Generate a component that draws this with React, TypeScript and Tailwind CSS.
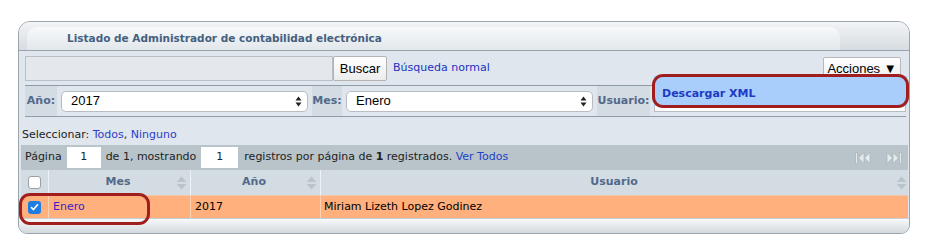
import React from 'react';

const SelectArrows = () => (
  <svg width="7" height="11" viewBox="0 0 7 11" className="shrink-0">
    <path d="M3.5 0.5 L6.5 4.5 L0.5 4.5 Z" fill="#222" />
    <path d="M3.5 10.5 L6.5 6.5 L0.5 6.5 Z" fill="#222" />
  </svg>
);

const SortArrows = () => (
  <svg width="11" height="14" viewBox="0 0 11 14" className="shrink-0">
    <path d="M5.5 0.5 L10.5 6 L0.5 6 Z" fill="#bcc4ca" />
    <path d="M5.5 13.5 L10.5 8 L0.5 8 Z" fill="#bcc4ca" />
  </svg>
);

const FirstIcon = () => (
  <svg width="16" height="12" viewBox="0 0 16 12">
    <rect x="0.5" y="0.5" width="2" height="11" fill="#e6ebee" stroke="#aab5bb" strokeWidth="0.8" />
    <path d="M9 0.5 L3.5 6 L9 11.5 Z" fill="#e6ebee" stroke="#aab5bb" strokeWidth="0.8" />
    <path d="M15 0.5 L9.5 6 L15 11.5 Z" fill="#e6ebee" stroke="#aab5bb" strokeWidth="0.8" />
  </svg>
);

const LastIcon = () => (
  <svg width="17" height="12" viewBox="0 0 17 12">
    <path d="M1 0.5 L6.5 6 L1 11.5 Z" fill="#e6ebee" stroke="#aab5bb" strokeWidth="0.8" />
    <path d="M7 0.5 L12.5 6 L7 11.5 Z" fill="#e6ebee" stroke="#aab5bb" strokeWidth="0.8" />
    <rect x="13.5" y="0.5" width="2" height="11" fill="#e6ebee" stroke="#aab5bb" strokeWidth="0.8" />
  </svg>
);

const FilterLabel = ({ text, width }: { text: string; width: string }) => (
  <div className={`${width} h-full flex items-center justify-center bg-[#d3dbe3] text-[11px] font-bold text-[#52698a]`}>
    {text}
  </div>
);

const FakeSelect = ({ value }: { value: string }) => (
  <div className="w-[247px] h-[21px] flex items-center justify-between rounded-[5px] border border-[#b9bdc2] bg-white pl-[9px] pr-[5px] font-['Liberation_Sans',Arial,sans-serif] text-[13px] text-black">
    <span>{value}</span>
    <SelectArrows />
  </div>
);

const App: React.FC = () => {
  return (
    <div className="relative w-[926px] h-[250px] bg-white pt-[21px] pl-[18px] font-['DejaVu_Sans',Verdana,sans-serif]">
      <div className="w-[892px] h-[213px] border border-[#9aa5ad] rounded-t-[12px] rounded-b-[9px] bg-[#dfe6ee] overflow-hidden flex flex-col">
        {/* header strip */}
        <div className="h-[29px] shrink-0 border-b border-[#9aa4ad] bg-gradient-to-b from-[#f2f4f6] to-[#d6dce1] flex items-end">
          <div className="ml-[8px] w-[813px] h-[23px] rounded-t-[10px] bg-gradient-to-b from-[#f7f9fa] to-[#e2e7eb] flex items-center pl-[40px] text-[10.5px] font-bold text-[#45607f]">
            Listado de Administrador de contabilidad electrónica
          </div>
        </div>

        {/* search row */}
        <div className="shrink-0 ml-[6px] mr-[3px] pt-[5px] pb-[4px] border-b border-[#8f9ba6] flex items-center">
          <div className="w-[308px] h-[25px] bg-[#e4e8ec] border border-[#b8c0c7]" />
          <div className="w-[54px] h-[25px] flex items-center justify-center border border-[#b3b3b3] rounded-[2px] bg-gradient-to-b from-[#ffffff] to-[#ececec] font-['Liberation_Sans',Arial,sans-serif] text-[13px] text-black">
            Buscar
          </div>
          <span className="ml-[6px] text-[11px] text-[#2032c0]">Búsqueda normal</span>
          <div className="ml-auto mr-[5px] w-[78px] h-[23px] flex items-center justify-center border border-[#b8b8b8] rounded-[2px] bg-gradient-to-b from-[#ffffff] to-[#eeeeee] font-['Liberation_Sans',Arial,sans-serif] text-[13px] text-black">
            Acciones ▼
          </div>
        </div>

        {/* filter row */}
        <div className="shrink-0 h-[31px] ml-[6px] mr-[3px] border-b border-[#8f9ba6] flex items-center gap-[4px]">
          <FilterLabel text="Año:" width="w-[32px]" />
          <FakeSelect value="2017" />
          <FilterLabel text="Mes:" width="w-[30px]" />
          <FakeSelect value="Enero" />
          <FilterLabel text="Usuario:" width="w-[53px]" />
          <div className="w-[252px] h-[21px] bg-white border border-[#b9bdc2]" />
        </div>

        {/* select */}
        <div className="shrink-0 h-[28px] pl-[3px] pt-[11px] text-[11px] leading-[14px] text-[#222]">
          Seleccionar: <span className="text-[#2a3ec6]">Todos</span>, <span className="text-[#2a3ec6]">Ninguno</span>
        </div>

        {/* table */}
        <div className="shrink-0 ml-[2px] mr-[1px] flex flex-col">
          <div className="h-[25px] bg-[#b8c4ca] flex items-center pl-[4px] text-[11px] text-[#222]">
            <span>Página</span>
            <div className="ml-[5px] w-[34px] h-[21px] bg-white flex items-center justify-center">1</div>
            <span className="ml-[5px]">de 1, mostrando</span>
            <div className="ml-[5px] w-[37px] h-[21px] bg-white flex items-center justify-center">1</div>
            <span className="ml-[6px]">
              registros por página de <b>1</b> registrados. <span className="text-[#2241c8]">Ver Todos</span>
            </span>
            <div className="ml-auto mr-[5px] flex items-center gap-[15px]">
              <FirstIcon />
              <LastIcon />
            </div>
          </div>

          <div className="h-[25px] bg-[#d3dce3] flex text-[11px] font-bold text-[#52698a]">
            <div className="w-[28px] flex items-center justify-center border-r border-[#eef2f5]">
              <div className="w-[13px] h-[13px] rounded-[3px] border border-[#9aa0a6] bg-white" />
            </div>
            <div className="w-[142px] flex items-center border-r border-[#eef2f5] pr-[3px]">
              <span className="flex-1 text-center pl-[11px]">Mes</span>
              <SortArrows />
            </div>
            <div className="w-[130px] flex items-center border-r border-[#eef2f5] pr-[3px]">
              <span className="flex-1 text-center pl-[11px]">Año</span>
              <SortArrows />
            </div>
            <div className="flex-1 flex items-center pr-[1px]">
              <span className="flex-1 text-center pl-[11px]">Usuario</span>
              <SortArrows />
            </div>
          </div>

          <div className="h-[23px] bg-[#ffb07c] flex text-[11px] text-black border-t border-[#f3c7a8]">
            <div className="w-[28px] flex items-center justify-center border-r border-[#ffd2b3]">
              <div className="w-[13px] h-[13px] rounded-[3px] bg-[#1e7ce3] flex items-center justify-center">
                <svg width="9" height="8" viewBox="0 0 9 8">
                  <path d="M1 4.2 L3.4 6.5 L8 1.2" fill="none" stroke="white" strokeWidth="1.6" />
                </svg>
              </div>
            </div>
            <div className="w-[142px] flex items-center pl-[4px] border-r border-[#ffd2b3] text-[#3a1ec6]">Enero</div>
            <div className="w-[130px] flex items-center pl-[4px] border-r border-[#ffd2b3]">2017</div>
            <div className="flex-1 flex items-center pl-[3px]">Miriam Lizeth Lopez Godinez</div>
          </div>
        </div>

        {/* footer */}
        <div className="flex-1 border-t border-[#c9d0d6] bg-gradient-to-b from-[#f8f9fa] to-[#d3d9de]" />
      </div>

      {/* dropdown menu */}
      <div className="absolute left-[654px] top-[76px] w-[253px] h-[30px] bg-[#a9cefb] pl-[8px] pt-[11px] leading-[13px] text-[11px] font-bold text-[#1d3cc4]">
        Descargar XML
      </div>

      {/* red highlight outlines */}
      <div className="absolute left-[652px] top-[74px] w-[257px] h-[34px] rounded-[11px] border-[3px] border-[#a11e1e]" />
      <div className="absolute left-[19px] top-[193px] w-[131px] h-[32px] rounded-[11px] border-[3px] border-[#a11e1e]" />
    </div>
  );
};

export default App;
